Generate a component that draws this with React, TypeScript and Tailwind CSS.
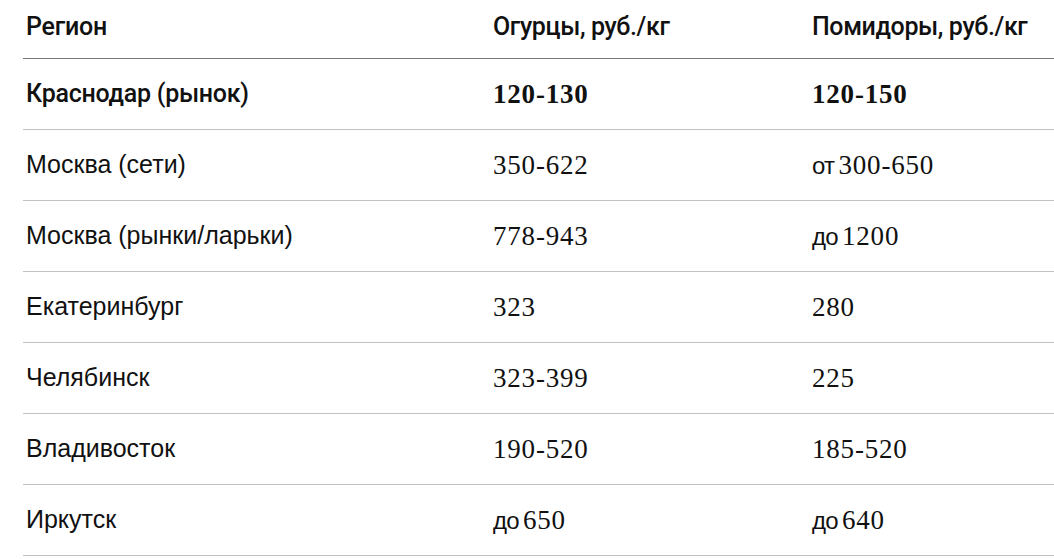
import React from "react";

const sans = "font-['Liberation_Sans',Arial,sans-serif]";
const medium = "font-['Roboto','Liberation_Sans',Arial,sans-serif] font-medium";
const serif = "font-['Liberation_Serif','Times_New_Roman',serif]";

const rows: [string, string, string][] = [
  ["Краснодар (рынок)", "120-130", "120-150"],
  ["Москва (сети)", "350-622", "от 300-650"],
  ["Москва (рынки/ларьки)", "778-943", "до 1200"],
  ["Екатеринбург", "323", "280"],
  ["Челябинск", "323-399", "225"],
  ["Владивосток", "190-520", "185-520"],
  ["Иркутск", "до 650", "до 640"],
];

// digits come from the serif face, words from the sans one
function Price({ value, bold }: { value: string; bold: boolean }) {
  const parts = value.split(/([\d-]+)/).filter(Boolean);
  return (
    <>
      {parts.map((p, i) =>
        /^[\d-]+$/.test(p) ? (
          <span key={i} className={`${serif} text-[27px] tracking-[0.03em] ${bold ? "font-bold" : ""}`}>
            {p}
          </span>
        ) : (
          <span key={i} className={`${sans} text-[24px] tracking-[-0.03em]`}>
            {p.replace(" ", "\u2009")}
          </span>
        )
      )}
    </>
  );
}

export default function App() {
  return (
    <div className="min-h-screen bg-white text-[#111] pl-[23px]">
      <div className="grid grid-cols-[467px_319px_1fr] h-[59px] border-b border-[#7a7a7a] items-start pt-[8px]">
        <div className={`${medium} pl-[3px] text-[25px] tracking-[-0.01em]`}>Регион</div>
        <div className={`${medium} pl-[3px] text-[25px] tracking-[-0.015em]`}>Огурцы, руб./кг</div>
        <div className={`${medium} pl-[3px] text-[25px] tracking-[-0.015em]`}>Помидоры, руб./кг</div>
      </div>
      {rows.map(([region, cucumbers, tomatoes], i) => (
        <div
          key={region}
          className="grid grid-cols-[467px_319px_1fr] h-[71px] items-center border-b border-[#c2c2c2]"
        >
          <div className={`pl-[3px] ${i === 0 ? `${medium} text-[25px] tracking-[-0.01em]` : `${sans} text-[25px]`}`}>
            {region}
          </div>
          <div className="pl-[3px] leading-none">
            <Price value={cucumbers} bold={i === 0} />
          </div>
          <div className="pl-[3px] leading-none">
            <Price value={tomatoes} bold={i === 0} />
          </div>
        </div>
      ))}
    </div>
  );
}
